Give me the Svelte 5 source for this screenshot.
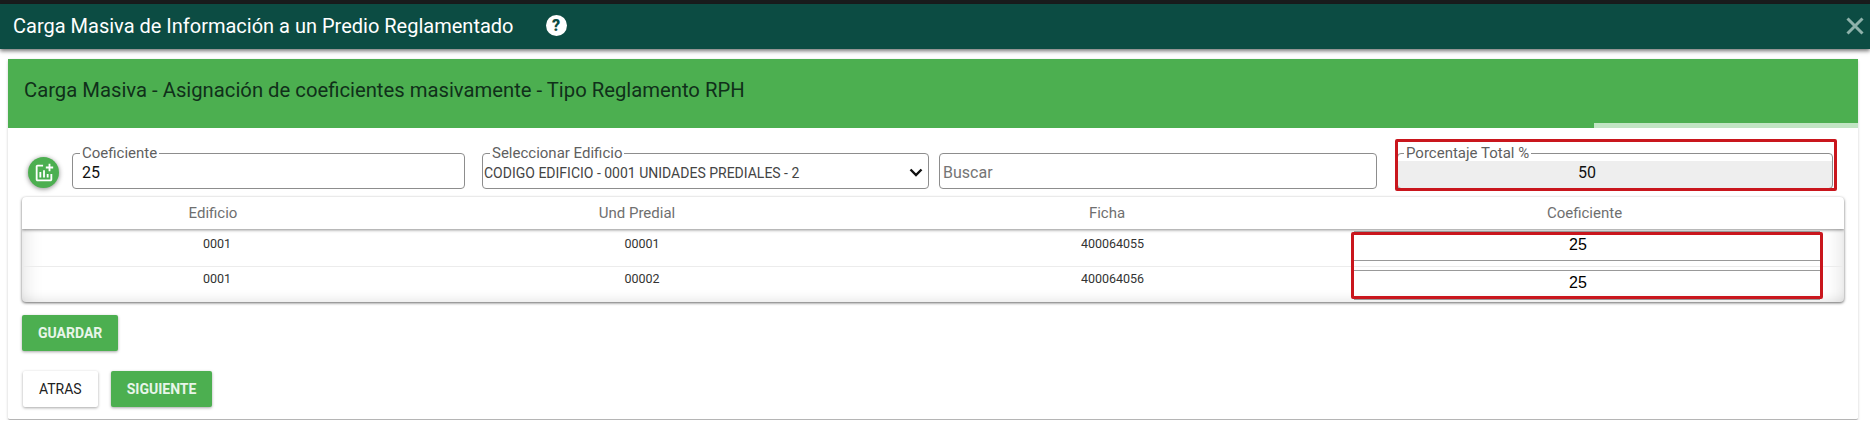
<script lang="ts">
	type Row = { edificio: string; unidad: string; ficha: string; coeficiente: string };

	const rows: Row[] = [
		{ edificio: '0001', unidad: '00001', ficha: '400064055', coeficiente: '25' },
		{ edificio: '0001', unidad: '00002', ficha: '400064056', coeficiente: '25' }
	];
	const columns = ['Edificio', 'Und Predial', 'Ficha', 'Coeficiente'];
</script>

<div class="topline"></div>
<header class="modal-bar">
	<h1>Carga Masiva de Información a un Predio Reglamentado</h1>
	<span class="help">?</span>
	<svg class="close" viewBox="0 0 18 18" aria-hidden="true">
		<path d="M1.500 1.500 16.500 16.500M16.500 1.500 1.500 16.500" />
	</svg>
</header>

<main class="page">
	<section class="card">
		<div class="card-head">
			<h2>Carga Masiva - Asignación de coeficientes masivamente - Tipo Reglamento RPH</h2>
			<div class="progress"></div>
		</div>

		<div class="card-body">
			<div class="filters">
				<button class="fab" aria-label="Agregar">
					<svg viewBox="0 0 24 24" aria-hidden="true">
						<path d="M22 5v2h-3v3h-2V7h-3V5h3V2h2v3h3zm-3 14H5V5h6V3H5c-1.100 0-2 .9-2 2v14c0 1.100.9 2 2 2h14c1.100 0 2-.9 2-2v-6h-2v6zm-4-6v4h2v-4h-2zm-4 4h2V9h-2v8zm-2 0v-6H7v6h2z" />
					</svg>
				</button>
				<fieldset class="field coef">
					<legend>Coeficiente</legend>
					<input value="25" />
				</fieldset>
				<fieldset class="field edificio">
					<legend>Seleccionar Edificio</legend>
					<select>
						<option>CODIGO EDIFICIO - 0001 UNIDADES PREDIALES - 2</option>
					</select>
					<svg class="chevron" viewBox="0 0 14 9" aria-hidden="true">
						<path d="M1.500 1.500 7 7l5.500-5.500" />
					</svg>
				</fieldset>
				<fieldset class="field buscar">
					<input placeholder="Buscar" />
				</fieldset>
				<div class="total-wrap">
					<fieldset class="field total">
						<legend>Porcentaje Total %</legend>
						<input value="50" readonly />
					</fieldset>
					<div class="mark"></div>
				</div>
			</div>

			<div class="grid">
				<div class="grid-head">
					{#each columns as col}
						<div>{col}</div>
					{/each}
				</div>
				<div class="grid-body">
					{#each rows as row}
						<div class="grid-row">
							<div>{row.edificio}</div>
							<div>{row.unidad}</div>
							<div>{row.ficha}</div>
							<div class="coef-cell"><input value={row.coeficiente} /></div>
						</div>
					{/each}
					<div class="mark rows-mark"></div>
				</div>
			</div>

			<div class="actions first">
				<button class="btn primary">GUARDAR</button>
			</div>
			<div class="actions second">
				<button class="btn plain">ATRAS</button>
				<button class="btn primary">SIGUIENTE</button>
			</div>
		</div>
	</section>
</main>

<style>
	:global(body) {
		background: #fff;
		font-family: Roboto, 'Liberation Sans', sans-serif;
	}

	.topline {
		height: 4px;
		background: #1a1c1d;
	}

	.modal-bar {
		position: relative;
		display: flex;
		align-items: center;
		height: 45px;
		box-sizing: border-box;
		padding: 0 0 2px 13px;
		background: #0c4c43;
		box-shadow: 0 2px 4px rgba(0, 0, 0, 0.55);
		color: #fff;
	}

	.modal-bar h1 {
		margin: 0;
		font-size: 20px;
		font-weight: 400;
	}

	.help {
		display: flex;
		align-items: center;
		justify-content: center;
		width: 21px;
		height: 21px;
		margin-left: 32px;
		border-radius: 50%;
		background: #fff;
		color: #0c4c43;
		font-size: 16px;
		font-weight: 900;
	}

	.close {
		width: 18px;
		height: 18px;
		margin-left: auto;
		margin-right: 6px;
	}

	.close path {
		fill: none;
		stroke: #8fb2ab;
		stroke-width: 3;
	}

	.page {
		padding: 10px 12px 0 8px;
	}

	.card {
		background: #fff;
		border-bottom: 1px solid #b5b5b5;
		border-radius: 2px;
		box-shadow: 0 1px 3px rgba(0, 0, 0, 0.2);
	}

	.card-head {
		position: relative;
		display: flex;
		align-items: center;
		height: 69px;
		padding: 0 16px 8px;
		box-sizing: border-box;
		background: #4caf50;
	}

	.card-head h2 {
		margin: 0;
		color: #10301a;
		font-size: 20.250px;
		font-weight: 400;
	}

	.progress {
		position: absolute;
		right: 0;
		bottom: 0;
		width: 264px;
		height: 5px;
		background: #c1e5c3;
	}

	.card-body {
		padding: 18px 14px 12px;
	}

	.filters {
		display: flex;
		align-items: flex-end;
		margin-left: 6px;
	}

	.fab {
		flex: none;
		display: flex;
		align-items: center;
		justify-content: center;
		width: 31px;
		height: 31px;
		margin: 0 13px 1px 0;
		padding: 0;
		border: 0;
		border-radius: 50%;
		background: #4caf50;
		box-shadow: 0 1px 5px rgba(0, 0, 0, 0.45);
	}

	.fab svg {
		width: 22px;
		height: 22px;
		fill: #fff;
	}

	.field {
		position: relative;
		box-sizing: border-box;
		min-width: 0;
		height: 43px;
		margin: 0;
		padding: 0 4px;
		border: 1px solid #8d8d8d;
		border-radius: 4px;
	}

	.field legend {
		margin-left: 3px;
		padding: 0 2px;
		color: #5f5f5f;
		font-size: 15px;
		line-height: 14px;
	}

	.field input,
	.field select {
		display: block;
		width: 100%;
		box-sizing: border-box;
		margin-top: 3px;
		padding: 0;
		border: 0;
		outline: 0;
		background: transparent;
		color: #111;
		font-family: Roboto, sans-serif;
		font-size: 16px;
		line-height: 20px;
	}

	.coef {
		width: 393px;
	}

	.coef input {
		padding-left: 5px;
	}

	.edificio {
		width: 447px;
		margin-left: 17px;
	}

	.edificio legend {
		margin-left: 3px;
	}

	.field select {
		appearance: none;
		font-size: 14px;
		color: #444;
		margin-left: -3px;
	}

	.chevron {
		position: absolute;
		right: 5px;
		top: 8px;
		width: 14px;
		height: 9px;
		fill: none;
		stroke: #111;
		stroke-width: 2.4;
	}

	.buscar {
		width: 438px;
		height: 36px;
		margin-left: 10px;
		padding: 6px 3px 0;
	}

	.buscar input::placeholder {
		color: #757575;
	}

	.total-wrap {
		position: relative;
		margin-left: 20px;
	}

	.total {
		width: 436px;
		padding: 0;
		background: linear-gradient(to bottom, transparent 7px, #eeeeee 7px);
		border-color: #8d8d8d;
	}

	.total input {
		padding-right: 56px;
		text-align: center;
	}

	.total legend {
		margin-left: 6px;
		background: #fff;
	}

	.mark {
		position: absolute;
		left: -2px;
		right: -4px;
		top: -7px;
		bottom: -2px;
		border: 3px solid #c9161d;
		border-radius: 2px;
		pointer-events: none;
	}

	.grid {
		margin-top: 8px;
		border-radius: 4px;
		background: #fff;
		box-shadow: 0 1px 3px rgba(0, 0, 0, 0.6);
		overflow: hidden;
	}

	.grid-head {
		display: grid;
		grid-template-columns: 382px 466px 474px 1fr;
		position: relative;
		height: 32px;
		align-items: center;
		box-shadow: 0 1px 3px rgba(0, 0, 0, 0.45);
		color: #6f6f6f;
		font-size: 15px;
		text-align: center;
	}

	.grid-head > div:last-child {
		padding-right: 19px;
	}

	.grid-body {
		position: relative;
		box-shadow: inset 0 -8px 12px -6px rgba(0, 0, 0, 0.1), inset 20px 0 20px -18px rgba(0, 0, 0, 0.12), inset -20px 0 20px -18px rgba(0, 0, 0, 0.12);
	}

	.grid-row {
		display: grid;
		grid-template-columns: 390px 460px 481px 1fr;
		height: 36.500px;
		box-sizing: border-box;
		color: #333;
		font-size: 12.500px;
		line-height: 16px;
		text-align: center;
	}

	.grid-row > div {
		padding-top: 7px;
		box-sizing: border-box;
	}

	.grid-row + .grid-row {
		border-top: 1px solid #ececec;
	}

	.grid-row + .grid-row > div {
		padding-top: 4px;
	}

	.grid-row > .coef-cell {
		padding: 2px 24px 0 1px;
	}

	.grid-row + .grid-row > .coef-cell {
		padding-top: 3px;
	}

	.coef-cell input {
		display: block;
		width: 100%;
		height: 30px;
		box-sizing: border-box;
		padding: 0 18px 3px 0;
		border: 0;
		border-top: 1px solid #999;
		border-bottom: 1px solid #999;
		outline: 0;
		background: transparent;
		color: #000;
		font-family: 'Liberation Sans', sans-serif;
		font-size: 16px;
		text-align: center;
	}

	.rows-mark {
		left: 1329px;
		right: 21px;
		top: 3px;
		bottom: 3px;
	}

	.actions {
		display: flex;
		gap: 13px;
	}

	.first {
		margin-top: 13px;
	}

	.second {
		margin-top: 20px;
		margin-left: 1px;
	}

	.btn {
		height: 36px;
		padding: 0 16px;
		border: 0;
		border-radius: 2px;
		font-family: Roboto, sans-serif;
		font-size: 14px;
		box-shadow: 0 1px 3px rgba(0, 0, 0, 0.35);
	}

	.primary {
		background: #4caf50;
		color: #e8f5e9;
		font-weight: 700;
	}

	.plain {
		background: #fff;
		color: #222;
		font-weight: 400;
	}
</style>
